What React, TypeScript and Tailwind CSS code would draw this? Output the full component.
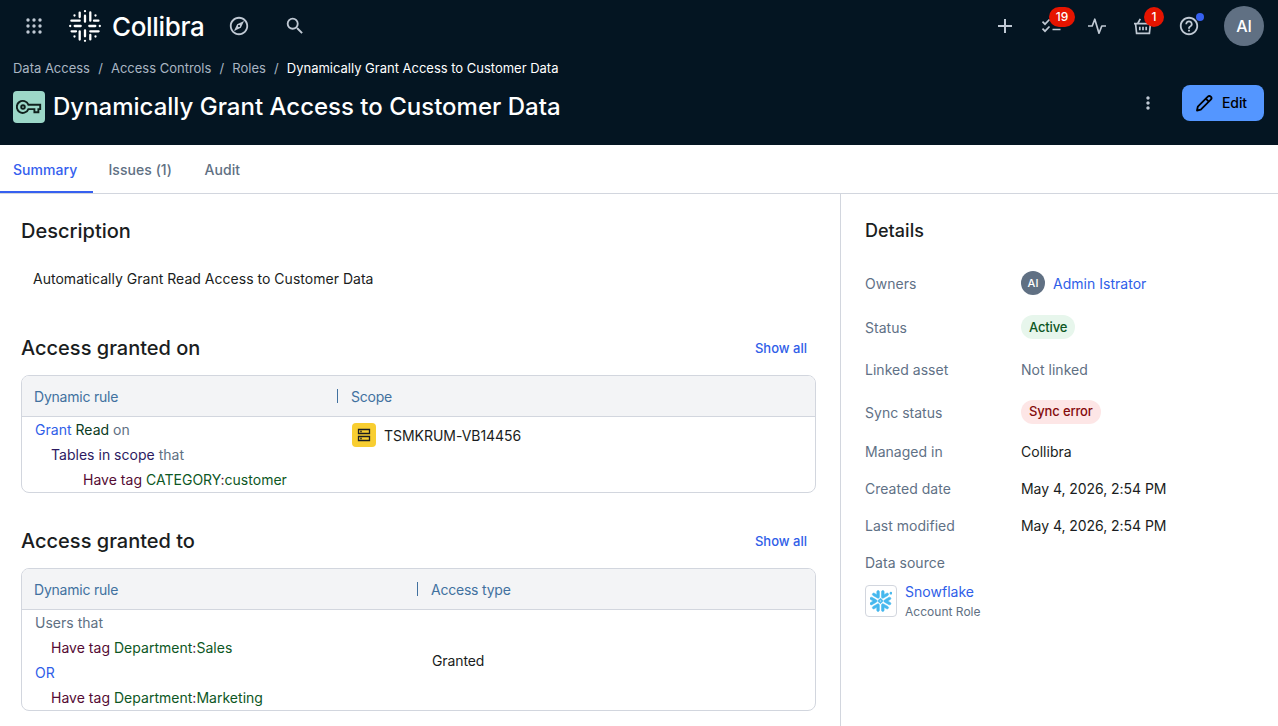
import React from "react";
import { MdAdd, MdMoreVert, MdOutlineExplore, MdOutlineHelpOutline, MdSearch } from "react-icons/md";
import { SiSnowflake } from "react-icons/si";

function Logo() {
  return (
    <svg width="32" height="32" viewBox="0 0 32 32" className="shrink-0" fill="none" stroke="#fff" strokeWidth="2.300" strokeLinecap="round">
      {[0, 90, 180, 270].map((a) => (
        <g key={a} transform={`rotate(${a} 16 16)`}>
          <path d="M16 1.200v.01M16 5.700v6M5.500 5.500h.01M2.400 10.700h8.300M10.700 2.600v4.400" />
        </g>
      ))}
    </svg>
  );
}

function AppsIcon() {
  return (
    <svg width="24" height="24" viewBox="0 0 24 24" fill="currentColor" className="shrink-0">
      {[6, 12, 18].map((y) => [6, 12, 18].map((x) => <circle key={`${x}-${y}`} cx={x} cy={y} r="1.700" />))}
    </svg>
  );
}

function Crumb({ children }: { children: React.ReactNode }) {
  return (
    <>
      <span>{children}</span>
      <span className="w-[21px] text-center">/</span>
    </>
  );
}

function Row({ label, h, children }: { label: string; h: string; children: React.ReactNode }) {
  return (
    <div className={`flex items-center ${h}`}>
      <div className="w-[156px] text-[#5f7186]">{label}</div>
      {children}
    </div>
  );
}

function SectionTitle({ children }: { children: React.ReactNode }) {
  return (
    <div className="flex h-7 items-center justify-between pr-[9px]">
      <h2 className="text-[20px] font-medium leading-7 tracking-[0]">{children}</h2>
      <a className="pt-[2px] text-[13px] font-medium tracking-[0] text-[#2f5ee8]">Show all</a>
    </div>
  );
}

function TableHead({ w, second }: { w: string; second: string }) {
  return (
    <div className="flex h-[41px] items-center border-b border-[#d2d6de] bg-[#f3f4f6] tracking-[-0.22px] text-[#41719f]">
      <div className={`pl-3 ${w}`}>Dynamic rule</div>
      <div className="mr-[13px] h-[14px] w-px bg-[#41719f]" />
      <div>{second}</div>
    </div>
  );
}

function Tag({ name, value }: { name: string; value: string }) {
  return (
    <>
      <span className="text-[#540b33]">Have tag </span>
      <span className="text-[#0d5724]">{name}</span>
      <span className="text-[#540b33]">:</span>
      <span className="text-[#0d5724]">{value}</span>
    </>
  );
}

export default function App() {
  return (
    <div className="flex h-[726px] w-[1278px] flex-col overflow-hidden bg-white font-['Inter',sans-serif] text-[14px] tracking-[0.02px] text-[#1a1d21]">
      <header className="h-[145px] shrink-0 bg-[#041522] text-white">
        <div className="flex h-[52px] items-center pl-[22px] pr-[14px] text-[#c0c9d4]">
          <AppsIcon />
          <div className="ml-[23px] flex items-center">
            <Logo />
            <span className="ml-[11px] w-[93px] whitespace-nowrap pt-px text-[26px] font-medium leading-8 tracking-[-0.35px] text-white">Collibra</span>
          </div>
          <MdOutlineExplore size={22} className="ml-[23px]" />
          <MdSearch size={22} className="ml-[34px]" />
          <div className="ml-auto flex items-center">
            <MdAdd size={24} className="-mr-px" />
            <div className="relative ml-[25px] h-[22px] w-[22px]">
              <svg width="22" height="22" viewBox="0 0 22 22" fill="none" stroke="currentColor" strokeWidth="1.700">
                <path d="M1.500 6.700l2.500 2.500L8.500 4.500M1.500 13.700l2.500 2.500L8.500 11.500M11.500 7.500H20M11.500 14.500H19.500" />
              </svg>
              <span className="absolute -top-[8px] left-[8px] flex h-5 w-[26px] items-center justify-center rounded-full bg-[#e61400] text-[12px] font-medium text-white">19</span>
            </div>
            <svg width="22" height="22" viewBox="0 0 22 22" className="ml-[23px]" fill="none" stroke="currentColor" strokeWidth="1.700" strokeLinejoin="round">
              <path d="M2 11h4.200l2.600-6.800 4.200 14 2.800-7.200H20" />
            </svg>
            <div className="relative ml-[24px] h-[22px] w-[22px]">
              <svg width="22" height="22" viewBox="0 0 22 22" fill="none" stroke="currentColor" strokeWidth="1.700">
                <path d="M2 8.700h18M3.600 9l1 9.300h12.800l1-9.300M5.700 8.500L8.300 3.800M16.300 8.500L13.700 3.800M7.800 11.700v3.500M11 11.700v3.500M14.200 11.700v3.500" />
              </svg>
              <span className="absolute -top-[8px] left-[12px] flex h-5 w-5 items-center justify-center rounded-full bg-[#e61400] text-[12px] font-medium text-white">1</span>
            </div>
            <div className="relative ml-[24px]">
              <MdOutlineHelpOutline size={22} />
              <span className="absolute -top-[2px] left-[18px] h-2 w-2 rounded-full bg-[#3660f0]" />
            </div>
            <div className="ml-[24px] flex h-10 w-10 items-center justify-center rounded-full bg-[#607083] text-[16px] font-medium text-white">AI</div>
          </div>
        </div>
        <nav className="flex h-[33px] items-center pl-[13px] text-[13px] tracking-[-0.01px] text-[#a9b5c2]">
          <Crumb>Data Access</Crumb>
          <Crumb>Access Controls</Crumb>
          <Crumb>Roles</Crumb>
          <span className="text-white">Dynamically Grant Access to Customer Data</span>
        </nav>
        <div className="flex items-start pl-[13px] pr-[14px]">
          <div className="mt-[6px] flex h-8 w-8 items-center justify-center rounded-[4px] bg-[#9cd7c8]">
            <svg width="26" height="16" viewBox="0 0 26 16" fill="none" stroke="#10201d" strokeWidth="1.900">
              <path d="M12.400 5.700H24.200v4.400h-1.800v3.200h-4v-3.200h-6a6 6 0 1 1 0-4.400Z" />
              <circle cx="7" cy="8" r="1.800" />
            </svg>
          </div>
          <h1 className="ml-2 mt-[6px] text-[24px] font-medium leading-8 tracking-[0]">Dynamically Grant Access to Customer Data</h1>
          <MdMoreVert size={20} className="ml-auto mr-[24px] mt-2 text-[#c0c9d4]" />
          <button className="flex h-9 w-[82px] items-center justify-start gap-[7px] rounded-[8px] bg-[#5496ff] pb-px pl-[11px] text-[14px] font-medium tracking-[-0.1px] text-black">
            <svg width="22" height="22" viewBox="0 0 22 22" fill="none" stroke="currentColor" strokeWidth="1.800" strokeLinejoin="round">
              <path d="M4 18.500l.8-3.800L14.800 4.700a2.100 2.100 0 0 1 3 3L7.800 17.700ZM12.800 6.700l3 3" />
            </svg>
            Edit
          </button>
        </div>
      </header>
      <div className="flex h-[49px] shrink-0 border-b border-[#d2d6de] font-medium tracking-[0.05px] text-[#607083]">
        <div className="flex w-[93px] items-center border-b-2 border-[#3660f0] pl-[13px] pt-[2px] text-[#3560ee]">Summary</div>
        <div className="flex w-[96px] items-center pl-[15.500px] pt-px">Issues (1)</div>
        <div className="flex items-center pl-[15.500px] pt-px">Audit</div>
      </div>
      <div className="flex min-h-0 flex-1">
        <main className="w-[840px] shrink-0 pl-[21px] pr-6 pt-[23px]">
          <h2 className="text-[20px] font-medium leading-7 tracking-[0]">Description</h2>
          <p className="mt-6 pl-3 leading-5">Automatically Grant Read Access to Customer Data</p>
          <div className="mt-[45px]"><SectionTitle>Access granted on</SectionTitle></div>
          <div className="mt-[13px] h-[118px] overflow-hidden rounded-[8px] border border-[#d2d6de]">
            <TableHead w="w-[315px]" second="Scope" />
            <div className="flex">
              <div className="w-[330px] pl-[13px] leading-[25px]">
                <div><span className="text-[#2f5ee8]">Grant</span> <span className="text-[#0b3b23]">Read</span> <span className="text-[#607083]">on</span></div>
                <div className="pl-4"><span className="text-[#2c1a61]">Tables in scope</span> <span className="text-[#607083]">that</span></div>
                <div className="pl-12"><Tag name="CATEGORY" value="customer" /></div>
              </div>
              <div className="mt-[6px] flex h-6 items-center gap-2">
                <div className="flex h-6 w-6 items-center justify-center rounded-[4px] bg-[#f8ce31]">
                  <svg width="14" height="14" viewBox="0 0 14 14" fill="none" stroke="#1a1d21" strokeWidth="1.300">
                    <path d="M1.500 1.500h11v4h-11zM1.500 8.500h11v4h-11zM3.300 3.500h1.400M3.300 10.500h1.400" />
                  </svg>
                </div>
                <span className="tracking-[-0.03px]">TSMKRUM-VB14456</span>
              </div>
            </div>
          </div>
          <div className="mt-[34px]"><SectionTitle>Access granted to</SectionTitle></div>
          <div className="mt-[13px] h-[143px] overflow-hidden rounded-[8px] border border-[#d2d6de]">
            <TableHead w="w-[395px]" second="Access type" />
            <div className="flex items-start">
              <div className="w-[410px] pl-[13px] leading-[25px]">
                <div className="text-[#607083]">Users that</div>
                <div className="pl-4"><Tag name="Department" value="Sales" /></div>
                <div className="text-[#2f5ee8]">OR</div>
                <div className="pl-4"><Tag name="Department" value="Marketing" /></div>
              </div>
              <div className="pt-[41px] leading-5 tracking-[-0.1px]">Granted</div>
            </div>
          </div>
        </main>
        <aside className="flex-1 border-l border-[#d2d6de] pl-6 pt-[23px]">
          <h2 className="text-[18px] font-medium leading-7">Details</h2>
          <div className="mt-[16px]">
            <Row label="Owners" h="h-11">
              <div className="flex h-6 w-6 items-center justify-center rounded-full bg-[#607083] text-[11px] font-medium text-white">AI</div>
              <a className="ml-2 text-[#2f5ee8]">Admin Istrator</a>
            </Row>
            <Row label="Status" h="h-[44px]">
              <span className="flex h-6 items-center rounded-full bg-[#e7f6ec] px-2 pt-px text-[13px] font-medium tracking-[-0.15px] text-[#0d5724]">Active</span>
            </Row>
            <Row label="Linked asset" h="h-[41px]"><span className="text-[#607083]">Not linked</span></Row>
            <Row label="Sync status" h="h-[44px]">
              <span className="flex h-6 items-center rounded-full bg-[#fde6e6] px-2 text-[13px] font-medium tracking-[-0.15px] text-[#850c0c]">Sync error</span>
            </Row>
            <Row label="Managed in" h="h-[35px]">Collibra</Row>
            <Row label="Created date" h="h-[38px]"><span className="tracking-[-0.05px]">May 4, 2026, 2:54 PM</span></Row>
            <Row label="Last modified" h="h-[36px]"><span className="tracking-[-0.05px]">May 4, 2026, 2:54 PM</span></Row>
            <div className="pt-[10px] leading-5 text-[#607083]">Data source</div>
            <div className="mt-[9px] flex gap-2">
              <div className="mt-[3px] flex h-8 w-8 items-center justify-center rounded-[4px] border border-[#d2d6de]">
                <SiSnowflake size={22} color="#45b8ee" stroke="#45b8ee" strokeWidth={0.600} />
              </div>
              <div>
                <div className="leading-5 text-[#2f5ee8]">Snowflake</div>
                <div className="text-[12px] leading-5 text-[#607083]">Account Role</div>
              </div>
            </div>
          </div>
        </aside>
      </div>
    </div>
  );
}
